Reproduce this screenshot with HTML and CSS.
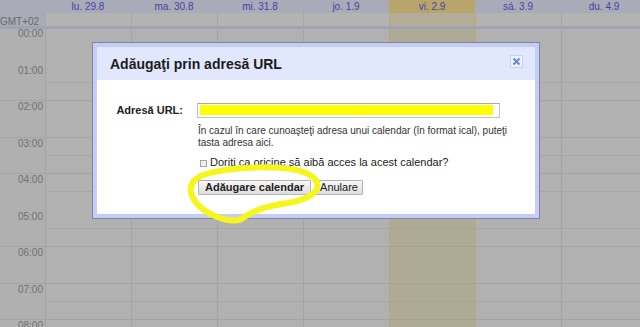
FILE: index.html
```html
<!DOCTYPE html>
<html lang="ro">
<head>
<meta charset="utf-8">
<title>Adăugaţi prin adresă URL</title>
<link rel="stylesheet" href="styles.css">
</head>
<body>
<div class="cal">
  <div class="row head">
    <div class="gut"></div>
    <div class="day">lu. 29.8</div>
    <div class="day">ma. 30.8</div>
    <div class="day">mi. 31.8</div>
    <div class="day">jo. 1.9</div>
    <div class="day today">vi. 2.9</div>
    <div class="day">sá. 3.9</div>
    <div class="day">du. 4.9</div>
  </div>
  <div class="row allday">
    <div class="gut">GMT+02</div>
    <div class="cell"></div>
    <div class="cell"></div>
    <div class="cell"></div>
    <div class="cell"></div>
    <div class="cell today"></div>
    <div class="cell next"></div>
    <div class="cell"></div>
  </div>
  <div class="band"></div>
  <div class="row grid">
    <div class="gut times">
      <div class="t">00:00</div>
      <div class="t">01:00</div>
      <div class="t">02:00</div>
      <div class="t">03:00</div>
      <div class="t">04:00</div>
      <div class="t">05:00</div>
      <div class="t">06:00</div>
      <div class="t">07:00</div>
      <div class="t">08:00</div>
    </div>
    <div class="col"></div>
    <div class="col"></div>
    <div class="col"></div>
    <div class="col"></div>
    <div class="col today"></div>
    <div class="col next"></div>
    <div class="col"></div>
  </div>
</div>

<div class="dialog">
  <div class="dlg-title">
    <h1>Adăugaţi prin adresă URL</h1>
    <span class="close">
      <svg width="11" height="11" viewBox="0 0 11 11"><path d="M2.5 2.5 L8.5 8.5 M8.5 2.5 L2.5 8.5" stroke="#6a88d8" stroke-width="2" fill="none"/></svg>
    </span>
  </div>
  <div class="dlg-body">
    <div class="lbl">Adresă URL:</div>
    <div class="field">
      <div class="input"><span class="hl"></span></div>
      <div class="help">În cazul în care cunoaşteţi adresa unui calendar (în format ical), puteţi tasta adresa aici.</div>
      <div class="check"><span class="box"></span>Doriţi ca oricine să aibă acces la acest calendar?</div>
      <div class="buttons">
        <button class="btn primary">Adăugare calendar</button>
        <button class="btn cancel">Anulare</button>
      </div>
    </div>
  </div>
</div>

<svg class="scribble" width="640" height="327" viewBox="0 0 640 327">
  <path d="M 203 175 C 230 166, 295 163, 313 177 C 324 187, 314 199, 288 203 C 266 206, 252 211, 243 218 C 232 226, 200 214, 192 196 C 188 186, 193 179, 203 175" stroke="#f6f61c" stroke-width="6" fill="none" stroke-linecap="round" stroke-linejoin="round"/>
</svg>
</body>
</html>
```

FILE: styles.css
```css
body {
  margin: 0;
  width: 640px;
  height: 327px;
  overflow: hidden;
  position: relative;
  background: #b0b0b0;
  font-family: "Liberation Sans", Arial, sans-serif;
}

.cal {
  width: 640px;
  overflow: hidden;
}

.row {
  display: flex;
}

.gut {
  flex: 0 0 45px;
  box-sizing: border-box;
}

.head {
  height: 13px;
  background: #a9abb8;
}

.head .day {
  flex: 0 0 86px;
  text-align: center;
  font-size: 10px;
  line-height: 13px;
  color: #4444a8;
  white-space: nowrap;
}

.head .today {
  background: #b9a46c;
}

.allday {
  height: 13px;
}

.allday .gut {
  background: #a9abb8;
  font-size: 10px;
  line-height: 13px;
  padding-top: 2px;
  color: #686868;
  white-space: nowrap;
}

.allday .cell {
  flex: 0 0 86px;
  box-sizing: border-box;
  border-left: 1px solid #a6a6a6;
  background: #b3b3b3;
}

.allday .today {
  background: #b4ae99;
  border-left-color: #b8a77a;
}

.allday .next {
  border-left-color: #b8a77a;
}

.band {
  height: 3px;
  background: #a0a3b6;
}

.grid {
  height: 298px;
}

.times {
  background: repeating-linear-gradient(to bottom, transparent 0 34.5px, #a5a5a5 34.5px 35.5px, transparent 35.5px 36.5px);
}

.times .t {
  height: 36.5px;
  font-size: 10px;
  line-height: 12px;
  color: #707070;
  text-align: right;
  padding-right: 2px;
}

.times .t:first-child {
  margin-top: -1px;
}

.col {
  flex: 0 0 86px;
  box-sizing: border-box;
  border-left: 1px solid #a4a4a4;
  background-color: #b1b1b1;
  background-image: repeating-linear-gradient(to bottom, transparent 0 16.5px, #a7a7a7 16.5px 17.5px, transparent 17.5px 34.5px, #a4a4a4 34.5px 35.5px, transparent 35.5px 36.5px);
}

.col.today {
  background-color: #aeaa96;
  border-left-color: #b8a77a;
  background-image: repeating-linear-gradient(to bottom, transparent 0 16.5px, #a8a48f 16.5px 17.5px, transparent 17.5px 34.5px, #a6a28d 34.5px 35.5px, transparent 35.5px 36.5px);
}

.col.next {
  border-left-color: #b8a77a;
}

/* dialog */
.dialog {
  position: absolute;
  left: 92px;
  top: 42px;
  width: 448px;
  height: 177px;
  box-sizing: border-box;
  border: 1px solid #7d86a6;
  background: #c3cdf6;
  padding: 4px;
  display: flex;
  flex-direction: column;
}

.dlg-title {
  height: 33px;
  flex: 0 0 33px;
  background: #e1e7fc;
  display: flex;
  justify-content: space-between;
  align-items: center;
  padding: 0 12px 0 13px;
}

.dlg-title h1 {
  margin: 0;
  font-size: 14px;
  font-weight: bold;
  line-height: 16px;
  color: #1c1c1c;
}

.close {
  width: 13px;
  height: 13px;
  box-sizing: border-box;
  border: 1px solid #c9d2f2;
  background: #eef1fd;
  align-self: flex-start;
  margin-top: 8px;
  display: flex;
}

.dlg-body {
  flex: 1;
  background: #fff;
  padding-top: 23px;
  display: grid;
  grid-template-columns: 100px 1fr;
  align-content: start;
}

.lbl {
  text-align: right;
  padding-right: 14px;
  font-size: 11px;
  font-weight: bold;
  line-height: 13px;
  color: #222;
  margin-top: 1px;
}

.input {
  width: 303px;
  height: 15px;
  box-sizing: border-box;
  border: 1px solid #c2c2c2;
  border-top-color: #a9a9a9;
  padding: 1px 6px 2px 2px;
  display: flex;
}

.hl {
  flex: 1;
  background: #ffff00;
}

.help {
  margin-top: 6.5px;
  width: 322px;
  font-size: 10px;
  line-height: 12px;
  color: #333;
  padding-left: 1px;
}

.check {
  margin-top: 6.5px;
  padding-left: 3px;
  font-size: 11px;
  line-height: 14px;
  color: #222;
  white-space: nowrap;
}

.box {
  display: inline-block;
  width: 7px;
  height: 7px;
  box-sizing: border-box;
  border: 1px solid #a4a4a4;
  background: #f0f0f0;
  margin-right: 3px;
  vertical-align: -1px;
}

.buttons {
  margin-top: 11px;
  display: flex;
  gap: 4px;
  padding-left: 1px;
}

.btn {
  height: 15px;
  box-sizing: border-box;
  margin: 0;
  border: 1px solid #b3b3b3;
  border-radius: 1px;
  background: linear-gradient(to bottom, #f7f7f7, #dedede);
  font-family: "Liberation Sans", Arial, sans-serif;
  font-size: 11px;
  line-height: 13px;
  color: #222;
  padding: 0 6px;
  white-space: nowrap;
}

.primary {
  font-weight: bold;
}

.cancel {
  padding: 0 4px;
}

.scribble {
  position: absolute;
  left: 0;
  top: 0;
  pointer-events: none;
}
```
